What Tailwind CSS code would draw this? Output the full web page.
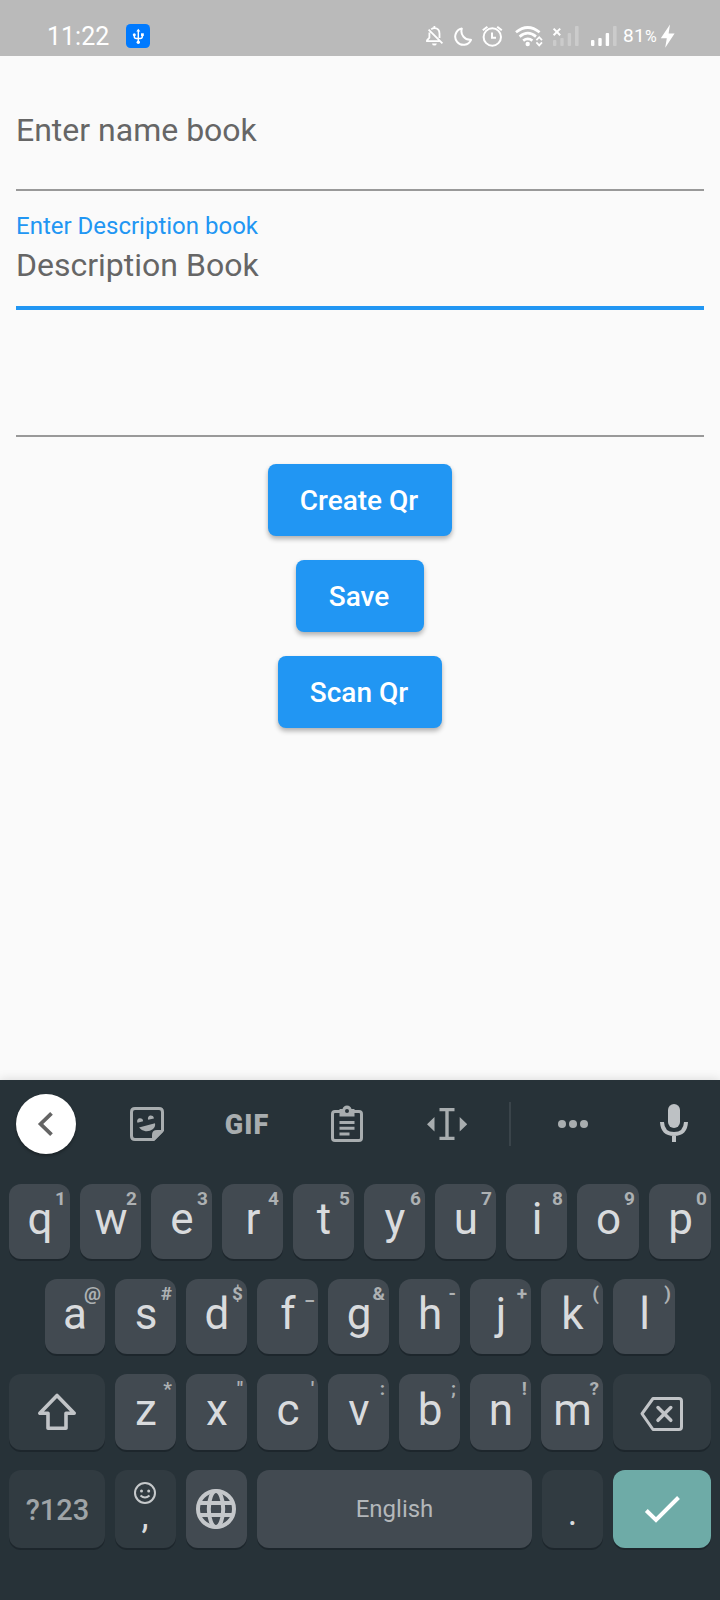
<!DOCTYPE html>
<html lang="en">
<head>
<meta charset="utf-8">
<title>Book form</title>
<script src="https://cdn.jsdelivr.net/npm/@tailwindcss/browser@4"></script>
</head>
<body class="w-[720px] h-[1600px] overflow-hidden bg-[#fafafa] font-['Roboto',sans-serif] flex flex-col">

<header class="h-14 shrink-0 bg-[#bababa] flex items-start pt-6 text-white">
  <div class="ml-[47px] w-[79px] text-[25px] leading-[25px]">11:22</div>
  <svg class="w-6 h-6 shrink-0" viewBox="0 0 24 24"><rect width="24" height="24" rx="4.5" fill="#007aff"/><g fill="none" stroke="#fff" stroke-width="1.4"><path d="M12.3 6.5V18M8.3 11v1.5q0 2 2 2h4q2 0 2-2V11"/></g><path d="M12.3 4.8l2 2.8h-4z" fill="#fff"/><circle cx="12.3" cy="18.2" r="1.7" fill="#fff"/><circle cx="8.3" cy="10.8" r="1.5" fill="#fff"/><rect x="15" y="9.3" width="2.8" height="2.8" fill="#fff"/></svg>
  <!-- muted, do not disturb, alarm -->
  <svg class="ml-[275px] w-[19px] h-6 shrink-0" viewBox="425 24 19 24" fill="none" stroke="#fff" stroke-width="1.8"><path d="M431.2 29.3q1.2-1.1 3.3-1.1c3.4 0 5 2.4 5 5.6v4.2M429.4 32.4v5.3l-2.4 2.6v.9h12.5M428.6 29.6l13.8 13.8" /><path d="M434.4 26v2.4"/><path d="M432 43.4h4.8q-.3 2.2-2.4 2.2t-2.4-2.2z" fill="#fff" stroke="none"/></svg>
  <svg class="ml-[10px] w-[20px] h-6 shrink-0" viewBox="454 24 20 24" fill="none" stroke="#fff" stroke-width="2" stroke-linejoin="round"><path d="M461.8 28.6a8.2 8.2 0 1 0 9.2 11.2a8.7 8.7 0 0 1-9.2-11.2z"/></svg>
  <svg class="ml-[7px] w-[22px] h-6 shrink-0" viewBox="481 24 22 24" fill="none" stroke="#fff" stroke-width="2"><circle cx="492.3" cy="37" r="8.7"/><path d="M492 32.5v5.2h4M482.8 30.3l4.6-3.6M501.8 30.3l-4.6-3.6"/></svg>
  <svg class="ml-3 w-[28px] h-6 shrink-0" viewBox="515 24 28 24" fill="none" stroke="#fff" stroke-width="2.7"><path d="M516 32.3q11.7-9.6 23.6 0M519.6 36.6q8.2-6.8 16.4 0M523.2 40.6q4.6-3.6 9.2 0"/><circle cx="527.7" cy="44" r="2.2" fill="#fff" stroke="none"/><path d="M536.4 40.2l2.8-3 2.8 3M536.4 42.4l2.8 3 2.8-3" stroke-width="1.7"/></svg>
  <svg class="ml-[9px] w-[28px] h-6 shrink-0" viewBox="552 24 28 24" fill="#cbcbcb"><rect x="553" y="40" width="3.4" height="6" rx="1"/><rect x="560.3" y="38" width="3.4" height="8" rx="1"/><rect x="567.7" y="33" width="3.4" height="13" rx="1"/><rect x="575" y="26" width="3.6" height="20" rx="1"/><path d="M553.6 28.6l6.6 6.6M560.2 28.6l-6.6 6.6" stroke="#fff" stroke-width="2"/></svg>
  <svg class="ml-[10px] w-[28px] h-6 shrink-0" viewBox="590 24 28 24" fill="#fff"><rect x="591" y="40" width="3.4" height="6" rx="1"/><rect x="598.3" y="38" width="3.4" height="8" rx="1"/><rect x="605.7" y="33" width="3.4" height="13" rx="1"/><rect x="613" y="26" width="3.6" height="20" rx="1" fill="#cbcbcb"/></svg>
  <div class="ml-[5px] w-[37px] text-[19px] leading-[23px] tracking-[0.3px] whitespace-nowrap">81<span class="text-[16px] tracking-normal">%</span></div>
  <svg class="w-[16px] h-6 shrink-0" viewBox="660 24 16 24"><path d="M670 24.5l-9.2 13.8h6l-1.6 9.5L674.6 33.6h-6z" fill="#fff"/></svg>
</header>

<main class="flex-1 min-h-0 px-4 flex flex-col text-[#666]">
  <div class="pt-[55px] pb-10 border-b-2 border-[#999] text-[32px] leading-[38px]">Enter name book</div>
  <div class="pt-[21px] pb-[22px] border-b-4 border-[#2196f3]">
    <div class="text-2xl leading-7 text-[#2196f3]">Enter Description book</div>
    <div class="mt-1.5 text-[32px] leading-[38px]">Description Book</div>
  </div>
  <div class="h-[127px] border-b-2 border-[#999]"></div>
  <div class="mt-[27px] flex flex-col items-center gap-6 text-white text-[28px] font-medium leading-[70px]">
    <button class="w-[184px] h-[72px] pt-0.5 pr-0.5 rounded-lg bg-[#2196f3] shadow-[0_3px_5px_rgba(0,0,0,0.3)]">Create Qr</button>
    <button class="w-[128px] h-[72px] pt-0.5 pr-0.5 rounded-lg bg-[#2196f3] shadow-[0_3px_5px_rgba(0,0,0,0.3)]">Save</button>
    <button class="w-[164px] h-[72px] pt-0.5 pr-0.5 rounded-lg bg-[#2196f3] shadow-[0_3px_5px_rgba(0,0,0,0.3)]">Scan Qr</button>
  </div>
</main>

<section class="h-[520px] shrink-0 bg-[#273238] shadow-[0_0_10px_rgba(0,0,0,0.15)]">
  <div class="h-[88px] flex items-center text-[#a8adaf]">
    <div class="ml-4 w-[60px] h-[60px] rounded-full bg-white flex items-center justify-center shadow-[0_2px_3px_rgba(0,0,0,0.3)]">
      <svg class="w-[60px] h-[60px]" viewBox="16 1094 60 60" fill="none" stroke="#646464" stroke-width="3.8"><path d="M51.5 1113.3L40.6 1124l10.9 10.7"/></svg>
    </div>
    <div class="ml-[21px] w-[100px] flex justify-center">
      <svg class="w-[34px] h-[34px]" viewBox="0 0 34 34" fill="currentColor"><path d="M5 1.5h24q3.5 0 3.5 3.5v18.5l-9 9H5q-3.5 0-3.5-3.5V5Q1.500 1.500 5 1.500z" fill="none" stroke="currentColor" stroke-width="3"/><path d="M22 33v-5q0-5 5-5h6v2l-8.500 8.500z"/><path d="M9 20.500L25 16.200q.8 3.500-2.300 6-3 2.400-7.200 2-4-.500-6.500-3.700z"/><path d="M7.500 15.700a3 3 0 1 1 5.600-1.400zM18.200 12.800a3 3 0 1 1 5.700-1.400z"/></svg>
    </div>
    <div class="w-[100px] pt-px text-center text-[27px] font-black leading-[34px] tracking-[1px]">GIF</div>
    <div class="w-[100px] flex justify-center">
      <svg class="w-[32px] h-[38px]" viewBox="331 1105 32 38" fill="currentColor"><rect x="332.500" y="1111.500" width="29" height="29" rx="2.500" fill="none" stroke="currentColor" stroke-width="3"/><path d="M339.500 1116.500v-7.500h3q1-3.500 4.500-3.500t4.500 3.500h3v7.500z"/><circle cx="347" cy="1111" r="2" fill="#273238"/><path d="M339.500 1121h15v3h-15zM339.500 1126.800h15v3h-15zM339.500 1132.500h10v3h-10z"/></svg>
    </div>
    <div class="w-[100px] flex justify-center">
      <svg class="w-[40px] h-[32px]" viewBox="427 1108 40 32" fill="currentColor"><path d="M439.500 1108h15v3.300h-5.800v25.400h5.800v3.300h-15v-3.300h5.800v-25.400h-5.800zM434.500 1117v14.500l-7.500-7.250zM459.700 1117v14.500l7.500-7.250z"/></svg>
    </div>
    <div class="ml-3 w-0.5 h-11 bg-[#3a444a]"></div>
    <div class="ml-3 w-[100px] flex justify-center gap-[3px]">
      <span class="w-2 h-2 rounded-full bg-current"></span><span class="w-2 h-2 rounded-full bg-current"></span><span class="w-2 h-2 rounded-full bg-current"></span>
    </div>
    <div class="w-[97px] pl-[5px] flex justify-center">
      <svg class="w-[30px] h-[40px]" viewBox="659 1104 30 40" fill="#bdc1c4"><rect x="668" y="1104" width="12" height="24" rx="6"/><path d="M662 1122q.500 12 12 12t12-12M674 1134v8" fill="none" stroke="#bdc1c4" stroke-width="4"/></svg>
    </div>
  </div>

  <div class="pt-4 pl-[9px] flex flex-col gap-5 text-[#d9dbdd]">
    <div id="row1" class="flex gap-2.5 h-[75px] leading-[70px]"></div>
    <div id="row2" class="flex gap-2.5 h-[75px] leading-[70px] pl-9"></div>
    <div class="flex gap-2.5 h-[76px] leading-[72px]">
      <div class="w-24 rounded-xl bg-[#313b41] shadow-[0_2px_0_#1d262c]">
        <svg class="w-24 h-[76px]" viewBox="9 1374 96 76" fill="none" stroke="#c1c4c7" stroke-width="3.6" stroke-linejoin="round"><path d="M57 1395.500L39.800 1413.200h8.200v15h18v-15h8.200z"/></svg>
      </div>
      <div id="row3" class="flex gap-2.5"></div>
      <div class="w-[98px] rounded-xl bg-[#313b41] shadow-[0_2px_0_#1d262c]">
        <svg class="w-[98px] h-[76px]" viewBox="613 1374 98 76" fill="none" stroke="#c1c4c7" stroke-width="3" stroke-linejoin="round"><path d="M653 1398.500h26q2.500 0 2.500 2.500v26q0 2.500-2.500 2.500h-26l-11-15.750z"/><path d="M658 1407.500l12.800 12.800M670.800 1407.500L658 1420.300" stroke-width="3.500" stroke-linecap="round"/></svg>
      </div>
    </div>
    <div class="flex gap-2.5 h-[78px]">
      <div class="w-24 pl-px rounded-xl bg-[#313b41] shadow-[0_2px_0_#1d262c] text-center text-[29px] font-medium leading-20 text-[#9fa4a7]">?123</div>
      <div class="w-[61px] pr-px rounded-xl bg-[#313b41] shadow-[0_2px_0_#1d262c] flex flex-col items-center pt-3">
        <svg class="w-[22px] h-[22px] shrink-0" viewBox="0 0 22 22" fill="none" stroke="#c6c9cb" stroke-width="2"><circle cx="11" cy="11" r="10"/><path d="M6.500 13.500q4.500 4 9 0"/><g fill="#c6c9cb" stroke="none"><circle cx="7.500" cy="9" r="1.500"/><circle cx="14.700" cy="9" r="1.500"/></g></svg>
        <div class="mt-[-2px] text-[36px] leading-[28px]">,</div>
      </div>
      <div class="w-[61px] pr-px rounded-xl bg-[#424a51] shadow-[0_2px_0_#1d262c] flex items-center justify-center">
        <svg class="w-10 h-10" viewBox="0 0 40 40" fill="none" stroke="#c4c7ca" stroke-width="4"><circle cx="20" cy="20" r="18"/><ellipse cx="20" cy="20" rx="7.200" ry="18"/><path d="M3 14h34M3 26h34"/></svg>
      </div>
      <div class="w-[275px] rounded-xl bg-[#424a51] shadow-[0_2px_0_#1d262c] text-center text-[24px] leading-[79px] text-[#b3b7ba]">English</div>
      <div class="w-[61px] rounded-xl bg-[#313b41] shadow-[0_2px_0_#1d262c] text-center text-[36px] leading-[87px]">.</div>
      <div class="w-[98px] rounded-xl bg-[#6eaba7] shadow-[0_2px_0_#1d262c]">
        <svg class="w-[98px] h-[78px]" viewBox="613 1470 98 78" fill="none" stroke="#fff" stroke-width="4"><path d="M646.300 1510.500l9.700 9.500 22.500-22.500"/></svg>
      </div>
    </div>
  </div>
</section>

<script>
const widths = {
  narrow: "relative w-[60px] rounded-xl bg-[#424a51] shadow-[0_2px_0_#1d262c] text-center text-[44px]",
  normal: "relative w-[61px] pl-px rounded-xl bg-[#424a51] shadow-[0_2px_0_#1d262c] text-center text-[44px]",
  wide: "relative w-[62px] pl-px rounded-xl bg-[#424a51] shadow-[0_2px_0_#1d262c] text-center text-[44px]"
};
// Each key: letter followed by its long-press symbol
const rows = {
  row1: ["q1","w2","e3","r4","t5","y6","u7","i8","o9","p0"],
  row2: ["a@","s#","d$","f_","g&","h-","j+","k(","l)"],
  row3: ["z*","x\"","c'","v:","b;","n!","m?"]
};
for (const [id, keys] of Object.entries(rows)) {
  const row = document.getElementById(id);
  for (const [letter, symbol] of keys) {
    const key = document.createElement("div");
    key.className = letter === "a" ? widths.narrow : "opklm".includes(letter) ? widths.wide : widths.normal;
    key.textContent = letter;
    const hint = document.createElement("span");
    hint.className = "absolute top-0 right-1 text-[19px] font-bold leading-[29px] text-[#adb1b3]";
    hint.textContent = symbol;
    key.append(hint);
    row.append(key);
  }
}
</script>
</body>
</html>
